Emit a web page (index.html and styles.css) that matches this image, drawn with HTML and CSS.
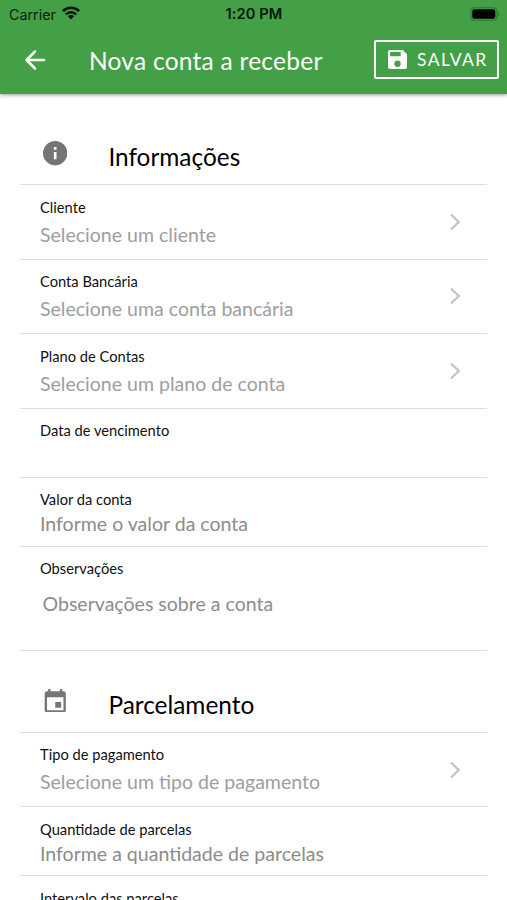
FILE: index.html
```html
<!DOCTYPE html>
<html lang="pt-BR">
<head>
<meta charset="utf-8">
<title>Nova conta a receber</title>
<link rel="stylesheet" href="styles.css">
</head>
<body>
<header class="top">
  <div class="status">
    <div class="carrier"><span>Carrier</span>
      <svg class="wifi" viewBox="0 0 18 14"><g fill="none" stroke="#061406" stroke-width="2.6"><path d="M.9 5.1a11.5 11.5 0 0 1 16.2 0"/><path d="M3.9 8.3a7.2 7.2 0 0 1 10.2 0"/></g><path d="M9 13.5 5.9 10.3a4.4 4.4 0 0 1 6.2 0z" fill="#061406"/></svg>
    </div>
    <div class="clock">1:20 PM</div>
    <svg class="battery" viewBox="0 0 30 14"><rect x=".8" y=".7" width="26" height="12.6" rx="3.6" fill="none" stroke="#2c762f" stroke-width="1.1"/><rect x="2.3" y="2.2" width="23" height="9.6" rx="2.2" fill="#000"/><path d="M28 4.8c1.8.7 1.8 3.7 0 4.4z" fill="#2c762f"/></svg>
  </div>
  <div class="bar">
    <svg class="back" viewBox="0 0 24 24"><path fill="none" stroke="#fff" stroke-width="2.5" stroke-linecap="round" stroke-linejoin="round" d="M21 12H3.5M12 3.5 3.5 12 12 20.5"/></svg>
    <h1>Nova conta a receber</h1>
    <button class="save">
      <svg viewBox="3 3 18 18"><path fill="#fff" d="M17 3H5a2 2 0 0 0-2 2v14a2 2 0 0 0 2 2h14a2 2 0 0 0 2-2V7l-4-4zm-5 16a3 3 0 1 1 0-6 3 3 0 0 1 0 6zm3-10H5V5h10v4z"/></svg>
      <span>SALVAR</span>
    </button>
  </div>
</header>
<main>
  <section>
    <div class="heading info">
      <svg viewBox="0 0 24 24"><path d="M12 0a12 12 0 1 0 0 24 12 12 0 0 0 0-24zm1.3 18h-2.6v-7.2h2.6V18zm0-9.4h-2.6V6h2.6v2.6z"/></svg>
      <h2>Informações</h2>
    </div>
    <div class="row select"><div><label>Cliente</label><p>Selecione um cliente</p></div><svg class="chev" viewBox="0 0 12 18"><path d="m2 1.5 7.7 7.5L2 16.5"/></svg></div>
    <div class="row select"><div><label>Conta Bancária</label><p>Selecione uma conta bancária</p></div><svg class="chev" viewBox="0 0 12 18"><path d="m2 1.5 7.7 7.5L2 16.5"/></svg></div>
    <div class="row select"><div><label>Plano de Contas</label><p>Selecione um plano de conta</p></div><svg class="chev" viewBox="0 0 12 18"><path d="m2 1.5 7.7 7.5L2 16.5"/></svg></div>
    <div class="row input"><div><label>Data de vencimento</label></div></div>
    <div class="row input"><div><label>Valor da conta</label><p>Informe o valor da conta</p></div></div>
    <div class="row area"><div><label>Observações</label><p>Observações sobre a conta</p></div></div>
  </section>
  <section>
    <div class="heading plan">
      <svg viewBox="3 1 18 20"><path d="M17 12h-5v5h5v-5zM16 1v2H8V1H6v2H5a2 2 0 0 0-2 2v14a2 2 0 0 0 2 2h14a2 2 0 0 0 2-2V5a2 2 0 0 0-2-2h-1V1h-2zm3 18H5V8h14v11z"/></svg>
      <h2>Parcelamento</h2>
    </div>
    <div class="row select"><div><label>Tipo de pagamento</label><p>Selecione um tipo de pagamento</p></div><svg class="chev" viewBox="0 0 12 18"><path d="m2 1.5 7.7 7.5L2 16.5"/></svg></div>
    <div class="row input"><div><label>Quantidade de parcelas</label><p>Informe a quantidade de parcelas</p></div></div>
    <div class="row input"><div><label>Intervalo das parcelas</label></div></div>
  </section>
</main>
</body>
</html>
```
FILE: styles.css
```css
* { box-sizing: border-box; }
html, body { height: 100%; }
body { margin: 0; overflow: hidden; background: #fff; font-family: Lato, sans-serif; color: #111; display: flex; flex-direction: column; }
h1, h2, p { margin: 0; font-weight: 400; white-space: nowrap; }
svg { display: block; flex: none; }
.top { flex: none; height: 94px; background: #43a047; box-shadow: 0 1px 4px rgba(0,0,0,.4); z-index: 1; }
.status { height: 27px; display: grid; grid-template-columns: 1fr auto 1fr; align-items: center; padding: 0 7px 0 9px; font: 14.3px/27px Inter, sans-serif; color: #0b210c; }
.carrier { display: flex; align-items: center; gap: 6px; }
.wifi { width: 18px; height: 14px; margin-top: -2px; }
.clock { font-weight: 600; font-size: 14.6px; line-height: 28px; letter-spacing: .1px; margin: 0 1px 0 0; color: #061406; }
.battery { width: 30px; height: 14px; justify-self: end; margin-top: -1px; }
.bar { height: 65px; display: flex; align-items: center; padding: 0 8px 0 23px; color: #fff; }
.back { width: 24px; height: 24px; }
.bar h1 { margin: 2px 0 0 42px; font-size: 24.5px; line-height: 32px; letter-spacing: .25px; }
.save { margin-left: auto; width: 125px; height: 39px; border: 2px solid #fff; border-radius: 2px; padding: 0 0 0 12px; background: none; color: #fff; display: flex; align-items: center; gap: 10px; font: 17.5px/24px Lato, sans-serif; letter-spacing: 1.4px; }
.save svg { width: 19px; height: 19px; }
main { flex: none; padding: 20px 20px 0; }
.heading { display: flex; border-bottom: 1px solid #dedede; padding-left: 22.5px; fill: #757575; }
.heading h2 { font-size: 24.4px; line-height: 32px; color: #000; }
.info { height: 71px; padding-top: 27px; }
.info svg { width: 24.4px; height: 24.4px; margin-top: .4px; }
.info h2 { margin: 0 0 0 41.5px; }
.plan { height: 81.85px; padding-top: 37px; padding-left: 23.5px; }
.plan svg { width: 22.5px; height: 23.5px; margin-top: 1px; }
.plan h2 { margin-left: 42.4px; margin-top: .7px; }
.row { border-bottom: 1px solid #dedede; padding: 11.4px 25px 0 20px; display: flex; justify-content: space-between; }
.row label { display: block; font-size: 14.7px; line-height: 20px; }
.row p { font-size: 19.55px; color: #9e9ea0; line-height: 26px; margin-top: 5px; }
.select { height: 74.5px; padding-top: 11.7px; }
.input { height: 69.2px; }
.input p { margin-top: 2px; color: #8c8c8c; }
.area { height: 104px; }
.area p { margin: 13px 0 0 2.5px; color: #8c8c8c; }
.chev { width: 12px; height: 18px; margin: 16.3px 1px 0 0; fill: none; stroke: #c4c4c6; stroke-width: 2.3; }
```
